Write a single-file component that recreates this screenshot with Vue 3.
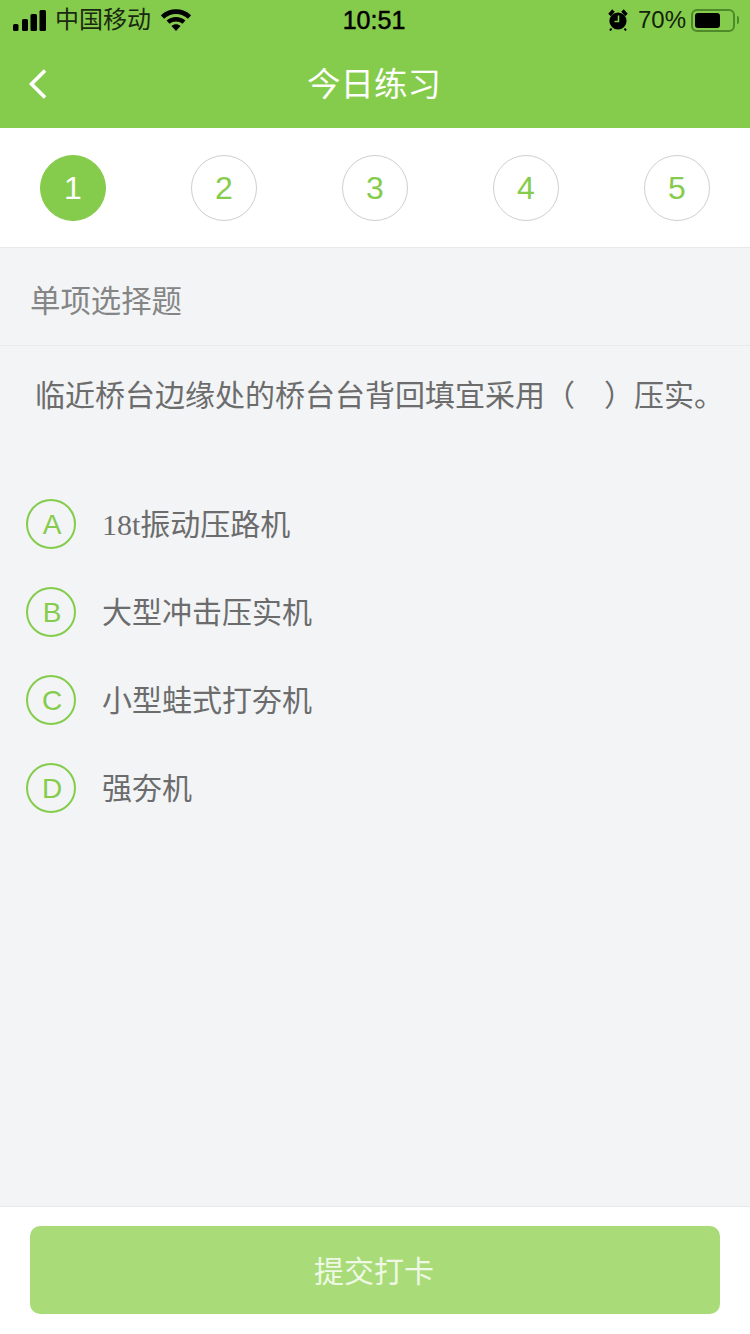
<template>
  <div class="page">
    <header class="head">
      <div class="status">
        <div class="status-left">
          <svg class="signal" width="34" height="21" viewBox="0 0 34 21">
            <rect x="0" y="14" width="5.5" height="7" rx="1.5" />
            <rect x="9" y="9" width="6" height="12" rx="1.5" />
            <rect x="17.5" y="4" width="6.5" height="17" rx="1.5" />
            <rect x="26.5" y="0" width="6.5" height="21" rx="1.5" />
          </svg>
          <span class="carrier">中国移动</span>
          <svg class="wifi" width="30" height="22" viewBox="0 0 30 22">
            <path d="M1.5 8C9 0.8 21 0.8 28.5 8" fill="none" stroke="#000" stroke-width="4.6" />
            <path d="M7 13.2C11.5 9.2 18.5 9.2 23 13.2" fill="none" stroke="#000" stroke-width="4.4" />
            <path d="M10.5 17C13 14.8 17 14.8 19.5 17L15 22Z" fill="#000" />
          </svg>
        </div>
        <div class="time">10:51</div>
        <div class="status-right">
          <svg class="alarm" width="20" height="22" viewBox="0 0 20 22">
            <circle cx="10" cy="12" r="8.6" fill="#000" />
            <path d="M1.5 6L5.5 1.5M18.5 6L14.5 1.5" stroke="#000" stroke-width="3.4" />
            <path d="M3.5 19.5L2 21.5M16.5 19.5L18 21.5" stroke="#000" stroke-width="2" />
            <path d="M10.5 6.5V12.5H6.5" fill="none" stroke="#86cc4c" stroke-width="1.6" />
          </svg>
          <span class="percent">70%</span>
          <div class="battery">
            <div class="battery-level" :style="{ width: battery + '%' }"></div>
          </div>
          <div class="battery-cap"></div>
        </div>
      </div>
      <div class="nav">
        <svg class="back" width="20" height="32" viewBox="0 0 20 32">
          <path d="M17 2.5L3.5 16L17 29.5" fill="none" stroke="#fff" stroke-width="3.6" />
        </svg>
        <span class="title">今日练习</span>
      </div>
    </header>

    <div class="steps">
      <div v-for="n in 5" :key="n" class="step" :class="{ active: n === 1 }">{{ n }}</div>
    </div>

    <main class="body">
      <div class="kind">单项选择题</div>
      <div class="question">临近桥台边缘处的桥台台背回填宜采用（<span class="blank"></span>）压实。</div>
      <div class="options">
        <div v-for="o in options" :key="o.key" class="option">
          <div class="letter">{{ o.key }}</div>
          <div class="option-text">
            <span v-if="o.prefix" class="serif">{{ o.prefix }}</span>{{ o.text }}
          </div>
        </div>
      </div>
    </main>

    <footer class="foot">
      <button class="submit">提交打卡</button>
    </footer>
  </div>
</template>

<script setup>
const battery = 70

const options = [
  { key: 'A', prefix: '18t', text: '振动压路机' },
  { key: 'B', text: '大型冲击压实机' },
  { key: 'C', text: '小型蛙式打夯机' },
  { key: 'D', text: '强夯机' }
]
</script>

<style>
body {
  margin: 0;
  background: #f2f4f6;
}
</style>

<style scoped>
.page {
  width: 750px;
  height: 1334px;
  display: flex;
  flex-direction: column;
  overflow: hidden;
  font-family: "Liberation Sans", "Noto Sans CJK SC", sans-serif;
  background: #f2f4f6;
}

.head {
  height: 128px;
  background: #86cc4c;
  flex-shrink: 0;
}

.status {
  height: 40px;
  display: flex;
  align-items: center;
  justify-content: space-between;
  padding: 0 11px 0 13px;
  color: #000;
}

.status-left {
  width: 240px;
  display: flex;
  align-items: center;
}

.signal {
  fill: #000;
  margin-right: 8px;
}

.carrier {
  font-size: 24px;
  color: #1a2a10;
  line-height: 40px;
}

.wifi {
  margin-left: 10px;
}

.time {
  font-size: 25px;
  font-weight: 500;
  position: relative;
  left: -2px;
  -webkit-text-stroke: 0.5px #000;
}

.status-right {
  width: 240px;
  display: flex;
  align-items: center;
  justify-content: flex-end;
}

.percent {
  font-size: 24px;
  color: #12220a;
  margin-left: 10px;
  margin-right: 5px;
}

.battery {
  width: 44px;
  height: 23px;
  box-sizing: border-box;
  border: 2px solid #4f8a2a;
  border-radius: 6px;
  padding: 2px;
}

.battery-level {
  height: 100%;
  background: #000;
  border-radius: 3px;
}

.battery-cap {
  width: 2px;
  height: 8px;
  margin-left: 2px;
  background: #4f8a2a;
  border-radius: 0 2px 2px 0;
}

.nav {
  height: 88px;
  position: relative;
  display: flex;
  align-items: center;
  justify-content: center;
}

.back {
  position: absolute;
  left: 28px;
  top: 28px;
}

.title {
  font-size: 33.5px;
  color: #fff;
  position: relative;
  top: -3px;
  left: -1px;
}

.steps {
  height: 120px;
  box-sizing: border-box;
  background: #fff;
  border-bottom: 1px solid #e8e8e8;
  display: flex;
  align-items: center;
  justify-content: space-between;
  padding: 0 40px;
  flex-shrink: 0;
}

.step {
  width: 66px;
  height: 66px;
  box-sizing: border-box;
  border: 1px solid #cfcfcf;
  border-radius: 50%;
  display: flex;
  align-items: center;
  justify-content: center;
  padding-top: 2px;
  font-size: 32px;
  color: #86cc4c;
}

.step.active {
  background: #86cc4c;
  border-color: #86cc4c;
  color: #fff;
}

.body {
  flex: 1;
}

.kind {
  height: 98px;
  box-sizing: border-box;
  border-bottom: 1px solid #e8eaec;
  padding: 4px 0 0 30px;
  display: flex;
  align-items: center;
  font-size: 30.4px;
  color: #858585;
}

.question {
  padding: 30px 0 0 35px;
  font-size: 30px;
  line-height: 40px;
  color: #6c6c6c;
  white-space: nowrap;
}

.blank {
  display: inline-block;
  width: 29px;
}

.options {
  margin-top: 83px;
  padding-left: 26px;
  display: flex;
  flex-direction: column;
  gap: 38px;
}

.option {
  display: flex;
  align-items: center;
  height: 50px;
}

.letter {
  width: 50px;
  height: 50px;
  box-sizing: border-box;
  border: 2px solid #86cc4c;
  border-radius: 50%;
  display: flex;
  align-items: center;
  justify-content: center;
  padding: 2px 0 0 2px;
  font-size: 28px;
  color: #86cc4c;
}

.option-text {
  margin-left: 26px;
  margin-top: -4px;
  font-size: 30px;
  color: #6c6c6c;
}

.serif {
  font-family: "Liberation Serif", serif;
}

.foot {
  height: 128px;
  box-sizing: border-box;
  background: #fff;
  border-top: 1px solid #e8e8e8;
  padding: 19px 30px 0;
  flex-shrink: 0;
}

.submit {
  width: 690px;
  height: 88px;
  border: 0;
  border-radius: 10px;
  background: #a9dc78;
  color: #eef8e4;
  font-family: inherit;
  font-size: 30px;
  padding: 0 2px 3px 0;
}
</style>
